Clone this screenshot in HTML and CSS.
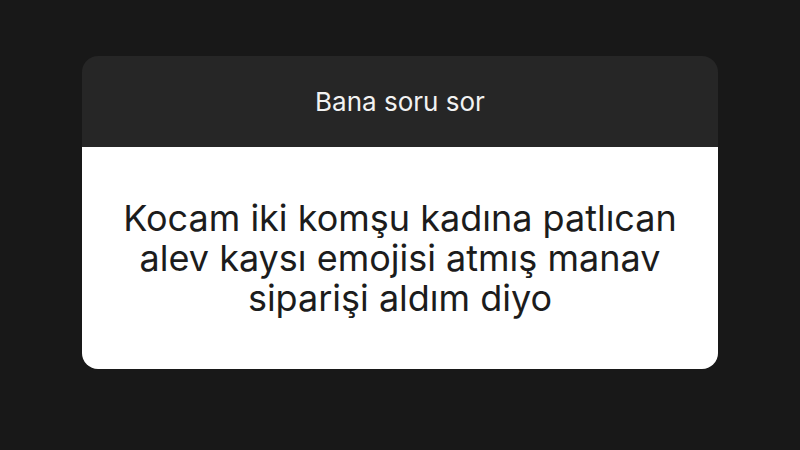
FILE: index.html
```html
<!DOCTYPE html>
<html lang="tr">
<head>
<meta charset="utf-8">
<link rel="stylesheet" href="styles.css">
</head>
<body>
<div class="card">
  <div class="card-head">Bana soru sor</div>
  <div class="card-body">
    <p class="question">Kocam iki komşu kadına patlıcan<br>alev kaysı emojisi atmış manav<br>siparişi aldım diyo</p>
  </div>
</div>
</body>
</html>
```
FILE: styles.css
```css
html, body {
  margin: 0;
  padding: 0;
  background: #181818;
  width: 800px;
  height: 450px;
  overflow: hidden;
}
body {
  padding: 56px 0 0 82px;
  box-sizing: border-box;
  font-family: Inter, "Liberation Sans", Arial, sans-serif;
}
.card {
  width: 636px;
  border-radius: 16px;
  overflow: hidden;
  display: flex;
  flex-direction: column;
}
.card-head {
  height: 91px;
  background: #262626;
  color: #f2f2f2;
  font-size: 26px;
  display: flex;
  align-items: center;
  justify-content: center;
}
.card-body {
  height: 222px;
  background: #ffffff;
  display: flex;
  align-items: center;
  justify-content: center;
}
.question {
  margin: 0;
  text-align: center;
  color: #1c1c1c;
  font-size: 36px;
  line-height: 40px;
}
```
